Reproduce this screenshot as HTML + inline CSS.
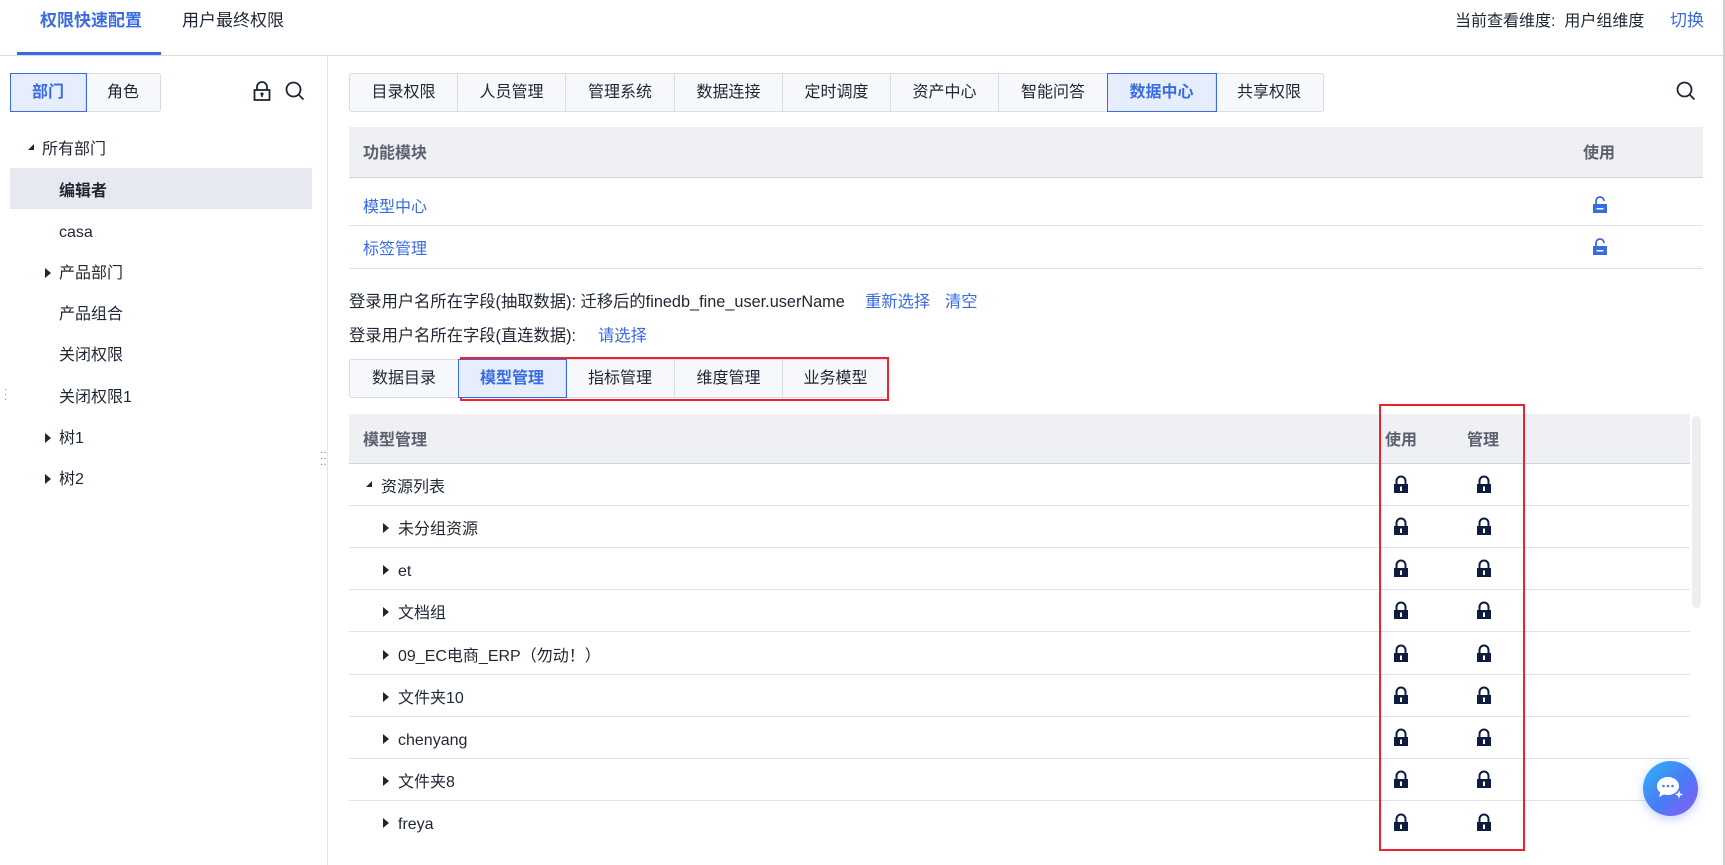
<!DOCTYPE html>
<html><head><meta charset="utf-8"><style>
*{margin:0;padding:0;box-sizing:border-box}
body{width:1725px;height:865px;overflow:hidden;background:#fff;font-family:"Liberation Sans","Noto Sans CJK SC",sans-serif;font-size:16px;line-height:26px;color:#1f2633;position:relative}
.a{position:absolute;white-space:nowrap}
.blue{color:#3b6be0}
.tabs{position:absolute;display:flex;height:39px;border:1px solid #d8dce3;border-radius:3px;background:#f7f8fb}
.tabs div{height:37px;line-height:37px;text-align:center;border-right:1px solid #d8dce3;font-size:16px}
.tabs div:last-child{border-right:none}
.tabs .on{background:#e6eefd;color:#3b6be0;font-weight:bold;outline:1px solid #3b6be0;position:relative;z-index:1}
.row{position:absolute;left:349px;width:1341px;height:42px;border-bottom:1px solid #dfe2e8}
.row span{position:absolute;top:11px;font-size:16px;line-height:26px}
.tri{position:absolute;width:0;height:0;border-top:5px solid transparent;border-bottom:5px solid transparent;border-left:6px solid #1f2633}
.tdn{position:absolute;width:0;height:0;border-left:6px solid transparent;border-bottom:6px solid #1f2633}
.lk{position:absolute}
</style></head><body>
<!-- top tabs -->
<div class="a" style="left:40px;top:8px;font-size:17px;font-weight:bold;color:#3b6be0">权限快速配置</div>
<div class="a" style="left:182px;top:8px;font-size:17px">用户最终权限</div>
<div class="a" style="left:17px;top:52px;width:144px;height:3px;background:#3b6be0"></div>
<div class="a" style="left:0;top:55px;width:1723px;height:1px;background:#d9dce2"></div>
<div class="a" style="left:1455px;top:9px;font-size:16px">当前查看维度:&nbsp;&nbsp;用户组维度</div>
<div class="a blue" style="left:1670px;top:8px;font-size:17px">切换</div>
<div class="a" style="left:1723px;top:0;width:2px;height:865px;background:#d0d0d0"></div>
<!-- left panel -->
<div class="a" style="left:327px;top:56px;width:1px;height:809px;background:#e0e3e8"></div>
<div class="tabs" style="left:10px;top:73px;width:151px">
<div class="on" style="width:75px">部门</div><div style="width:74px">角色</div></div>
<svg class="a" style="left:253px;top:81px" width="18" height="20" viewBox="0 0 18 20"><path d="M4 9V6a5 5 0 0 1 10 0v3" fill="none" stroke="#1f2633" stroke-width="1.8"/><rect x="1.5" y="9" width="15" height="10" fill="none" stroke="#1f2633" stroke-width="1.8"/><circle cx="9" cy="13" r="1.6" fill="#1f2633"/><path d="M9 13v3" stroke="#1f2633" stroke-width="1.6"/></svg>
<svg class="a" style="left:285px;top:81px" width="20" height="20" viewBox="0 0 20 20"><circle cx="8.5" cy="8.5" r="7" fill="none" stroke="#1f2633" stroke-width="1.8"/><path d="M13.5 13.5l5 5" stroke="#1f2633" stroke-width="1.8"/></svg>
<div class="tdn" style="left:28px;top:144px"></div>
<div class="a" style="left:42px;top:137px">所有部门</div>
<div class="a" style="left:10px;top:168px;width:302px;height:41px;background:#e6e9ef"></div>
<div class="a" style="left:59px;top:179px;font-weight:bold">编辑者</div>
<div class="a" style="left:59px;top:220px">casa</div>
<div class="tri" style="left:45px;top:268px"></div><div class="a" style="left:59px;top:261px">产品部门</div>
<div class="a" style="left:59px;top:302px">产品组合</div>
<div class="a" style="left:59px;top:343px">关闭权限</div>
<div class="a" style="left:59px;top:385px">关闭权限1</div>
<div class="tri" style="left:45px;top:433px"></div><div class="a" style="left:59px;top:426px">树1</div>
<div class="tri" style="left:45px;top:474px"></div><div class="a" style="left:59px;top:467px">树2</div>
<div class="a" style="left:4px;top:387px;color:#888;font-size:10px;line-height:5px">·<br>·<br>·</div>
<div class="a" style="left:320px;top:450px;color:#666;font-size:10px;line-height:6px">··<br>··<br>··</div>
<!-- right top tabs -->
<div class="tabs" style="left:349px;top:73px;width:975px">
<div style="width:108px">目录权限</div><div style="width:108px">人员管理</div><div style="width:109px">管理系统</div><div style="width:108px">数据连接</div><div style="width:108px">定时调度</div><div style="width:108px">资产中心</div><div style="width:109px">智能问答</div><div class="on" style="width:108px">数据中心</div><div style="width:106px">共享权限</div></div>
<svg class="a" style="left:1676px;top:81px" width="20" height="20" viewBox="0 0 20 20"><circle cx="8.5" cy="8.5" r="7" fill="none" stroke="#1f2633" stroke-width="1.8"/><path d="M13.5 13.5l5 5" stroke="#1f2633" stroke-width="1.8"/></svg>
<!-- function table -->
<div class="a" style="left:349px;top:127px;width:1354px;height:51px;background:#eef0f4;border-bottom:1px solid #cfd3da"></div>
<div class="a" style="left:363px;top:137px;line-height:34px;font-weight:bold;color:#5a6270">功能模块</div>
<div class="a" style="left:1583px;top:137px;line-height:34px;font-weight:bold;color:#5a6270">使用</div>
<div class="a" style="left:349px;top:178px;width:1354px;height:48px;border-bottom:1px solid #dfe2e8"></div>
<div class="a blue" style="left:363px;top:195px">模型中心</div>
<div class="a" style="left:349px;top:226px;width:1354px;height:43px;border-bottom:1px solid #dfe2e8"></div>
<div class="a blue" style="left:363px;top:237px">标签管理</div>
<svg class="a" style="left:1592px;top:196px" width="16" height="18" viewBox="0 0 16 18"><path d="M4 8V5a4 4 0 0 1 8 0" fill="none" stroke="#3b6be0" stroke-width="1.8"/><rect x="1" y="8" width="14" height="9" fill="#3b6be0"/><rect x="4.5" y="12" width="7" height="1.5" fill="#fff"/></svg>
<svg class="a" style="left:1592px;top:238px" width="16" height="18" viewBox="0 0 16 18"><path d="M4 8V5a4 4 0 0 1 8 0" fill="none" stroke="#3b6be0" stroke-width="1.8"/><rect x="1" y="8" width="14" height="9" fill="#3b6be0"/><rect x="4.5" y="12" width="7" height="1.5" fill="#fff"/></svg>
<!-- lines -->
<div class="a" style="left:349px;top:289px;font-size:16.3px">登录用户名所在字段(抽取数据): 迁移后的finedb_fine_user.userName</div>
<div class="a blue" style="left:865px;top:289px;font-size:16.3px">重新选择</div>
<div class="a blue" style="left:945px;top:289px;font-size:16.3px">清空</div>
<div class="a" style="left:349px;top:323px;font-size:16.3px">登录用户名所在字段(直连数据):</div>
<div class="a blue" style="left:598px;top:323px;font-size:16.3px">请选择</div>
<!-- sub tabs -->
<div class="tabs" style="left:349px;top:359px;width:540px">
<div style="width:109px">数据目录</div><div class="on" style="width:107px">模型管理</div><div style="width:109px">指标管理</div><div style="width:108px">维度管理</div><div style="width:105px">业务模型</div></div>
<div class="a" style="left:460px;top:357px;width:429px;height:44px;border:2px solid #f0212b"></div>
<!-- big table -->
<div class="a" style="left:349px;top:414px;width:1341px;height:50px;background:#eef0f4;border-bottom:1px solid #cfd3da"></div>
<div class="a" style="left:363px;top:428px;font-weight:bold;color:#5a6270">模型管理</div>
<div class="a" style="left:1385px;top:428px;font-weight:bold;color:#5a6270">使用</div>
<div class="a" style="left:1467px;top:428px;font-weight:bold;color:#5a6270">管理</div>
<div class="row" style="top:464px"><div class="tdn" style="left:17px;top:17px"></div><span style="left:32px">资源列表</span></div>
<div class="row" style="top:506px"><div class="tri" style="left:34px;top:17px"></div><span style="left:49px">未分组资源</span></div>
<div class="row" style="top:548px"><div class="tri" style="left:34px;top:17px"></div><span style="left:49px">et</span></div>
<div class="row" style="top:590px"><div class="tri" style="left:34px;top:17px"></div><span style="left:49px">文档组</span></div>
<div class="row" style="top:632px;height:43px"><div class="tri" style="left:34px;top:18px"></div><span style="left:49px;top:12px">09_EC电商_ERP（勿动！）</span></div>
<div class="row" style="top:675px"><div class="tri" style="left:34px;top:17px"></div><span style="left:49px">文件夹10</span></div>
<div class="row" style="top:717px"><div class="tri" style="left:34px;top:17px"></div><span style="left:49px">chenyang</span></div>
<div class="row" style="top:759px"><div class="tri" style="left:34px;top:17px"></div><span style="left:49px">文件夹8</span></div>
<div class="row" style="top:801px;border-bottom:none"><div class="tri" style="left:34px;top:17px"></div><span style="left:49px">freya</span></div>
<svg width="0" height="0" style="position:absolute"><defs><symbol id="L" viewBox="0 0 16 19"><path d="M3.5 9V6a4.5 4.5 0 0 1 9 0v3" fill="none" stroke="#0e1c3f" stroke-width="2"/><rect x="1" y="9" width="14" height="9" fill="#0e1c3f"/><rect x="7" y="11.5" width="2" height="4.5" fill="#fff"/></symbol></defs></svg>
<div class="a" style="left:1393px;top:0">
<svg class="lk" style="top:475px" width="16" height="19"><use href="#L"/></svg>
<svg class="lk" style="top:517px" width="16" height="19"><use href="#L"/></svg>
<svg class="lk" style="top:559px" width="16" height="19"><use href="#L"/></svg>
<svg class="lk" style="top:601px" width="16" height="19"><use href="#L"/></svg>
<svg class="lk" style="top:644px" width="16" height="19"><use href="#L"/></svg>
<svg class="lk" style="top:686px" width="16" height="19"><use href="#L"/></svg>
<svg class="lk" style="top:728px" width="16" height="19"><use href="#L"/></svg>
<svg class="lk" style="top:770px" width="16" height="19"><use href="#L"/></svg>
<svg class="lk" style="top:813px" width="16" height="19"><use href="#L"/></svg>
</div>
<div class="a" style="left:1476px;top:0">
<svg class="lk" style="top:475px" width="16" height="19"><use href="#L"/></svg>
<svg class="lk" style="top:517px" width="16" height="19"><use href="#L"/></svg>
<svg class="lk" style="top:559px" width="16" height="19"><use href="#L"/></svg>
<svg class="lk" style="top:601px" width="16" height="19"><use href="#L"/></svg>
<svg class="lk" style="top:644px" width="16" height="19"><use href="#L"/></svg>
<svg class="lk" style="top:686px" width="16" height="19"><use href="#L"/></svg>
<svg class="lk" style="top:728px" width="16" height="19"><use href="#L"/></svg>
<svg class="lk" style="top:770px" width="16" height="19"><use href="#L"/></svg>
<svg class="lk" style="top:813px" width="16" height="19"><use href="#L"/></svg>
</div>
<div class="a" style="left:1379px;top:404px;width:146px;height:447px;border:2px solid #f0212b"></div>
<div class="a" style="left:1692px;top:416px;width:9px;height:192px;background:#eceef2;border-radius:5px"></div>
<!-- chat -->
<div class="a" style="left:1643px;top:761px;width:55px;height:55px;border-radius:50%;background:linear-gradient(135deg,#2bb5f5,#4a7af5 55%,#8a5cf5);box-shadow:0 3px 10px rgba(60,100,220,.3)"></div>
<svg class="a" style="left:1655px;top:774px" width="32" height="30" viewBox="0 0 32 30"><path d="M13 3c6 0 11 4 11 9s-5 9-11 9c-1.5 0-3-.2-4-.6L4 23l1.2-4.5C3 16.8 2 14.5 2 12c0-5 5-9 11-9z" fill="#fff"/><circle cx="8.5" cy="12" r="1.3" fill="#4a7af5"/><circle cx="13" cy="12" r="1.3" fill="#4a7af5"/><circle cx="17.5" cy="12" r="1.3" fill="#4a7af5"/><path d="M24 15l1.5 4 4 1.5-4 1.5-1.5 4-1.5-4-4-1.5 4-1.5z" fill="#fff" stroke="#4a7af5" stroke-width="1"/></svg>
</body></html>
